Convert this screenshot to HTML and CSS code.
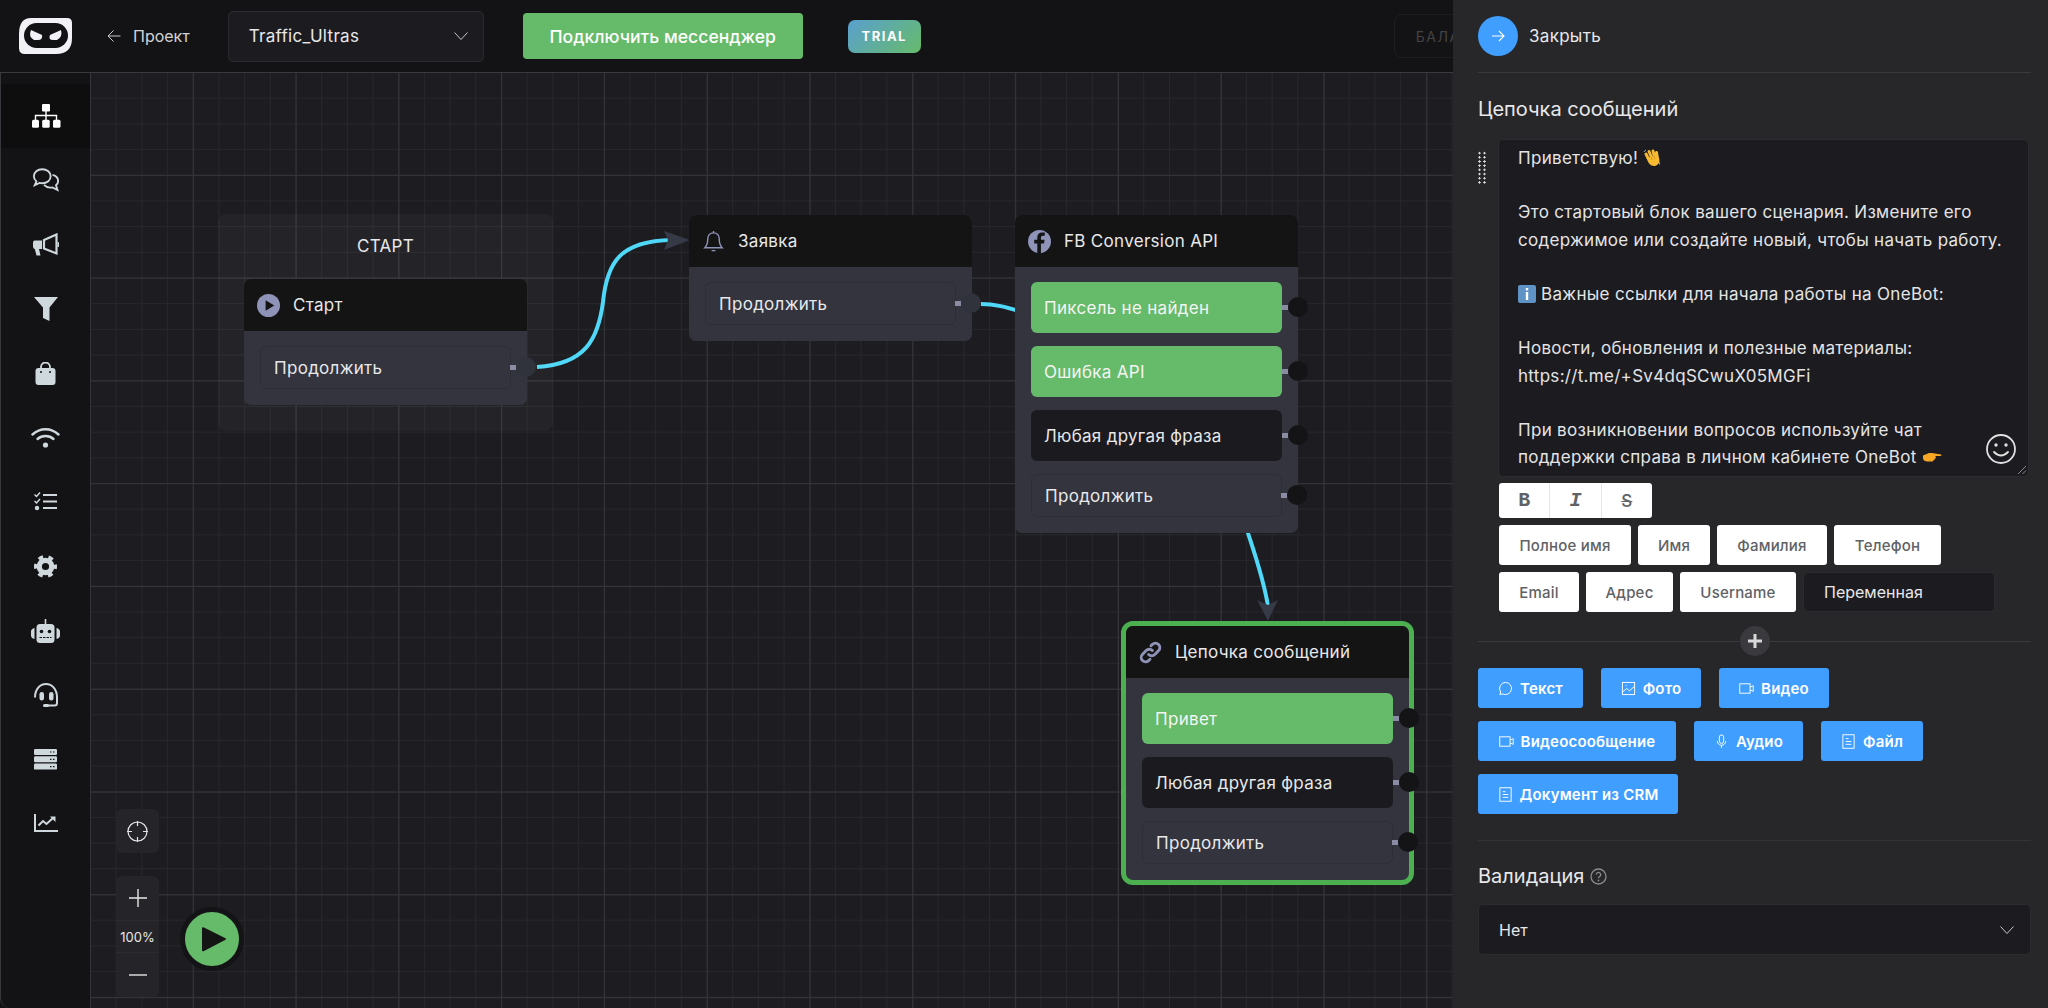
FILE: index.html
```html
<!DOCTYPE html>
<html lang="ru">
<head>
    <meta charset="UTF-8">
    <title>OneBot</title>
    <link rel="stylesheet" href="styles.css">
</head>
<body>
<div class="app">

    <header class="topbar">
        <svg class="logo" viewBox="0 0 53 36">
            <path d="M12 0H48Q53 0 53 5V20Q53 36 37 36H6Q0 36 0 30V16Q0 0 12 0Z" fill="#f1f1f6"/>
            <rect x="5" y="5" width="44" height="25" rx="12.5" fill="#121214"/>
            <path d="M12 12L23 17Q24 22 19 22H15Q9 19 12 12Z" fill="#f1f1f6"/>
            <path d="M42 12L31 17Q29 22 34 22H38Q44 19 42 12Z" fill="#f1f1f6"/>
        </svg>
        <a class="back">
            <svg class="back-arrow" viewBox="0 0 14 14"><path d="M13.5 7H1M6.5 1.5L1 7l5.5 5.5"/></svg>
            Проект
        </a>
        <div class="project-select">
            <span>Traffic_Ultras</span>
            <svg class="chevron" viewBox="0 0 14 8"><path d="M.5.5L7 7.5 13.5.5"/></svg>
        </div>
        <button class="connect-btn">Подключить мессенджер</button>
        <span class="trial">TRIAL</span>
        <div class="balance">БАЛАНС</div>
    </header>

    <nav class="sidebar">
        <a class="side-item active">
            <svg width="30" height="24" viewBox="0 0 30 24" fill="#fff">
                <rect x="11" y="0" width="8" height="7.5" rx="1"/>
                <rect x="1" y="15.7" width="7" height="8" rx="1.5"/>
                <rect x="11.2" y="15.7" width="7.5" height="8" rx="1.5"/>
                <rect x="22" y="15.7" width="7.5" height="8" rx="1.5"/>
                <path d="M15 7v9M4.5 16v-4.5h21V16" fill="none" stroke="#fff" stroke-width="1.4"/>
            </svg>
        </a>
        <a class="side-item">
            <svg width="28" height="26" viewBox="0 0 30 26" fill="none" stroke="#cfd8dc" stroke-width="2">
                <path d="M11 1.5c5.2 0 9 3.3 9 7.5s-3.8 7.5-9 7.5c-1 0-2-.1-2.9-.4L3 18.5l1.7-4C3 13 2 11.1 2 9c0-4.2 3.8-7.5 9-7.5z"/>
                <path d="M22 7.5c3.4.9 6 3.4 6 6.5 0 1.9-.9 3.5-2.3 4.7l1.6 5-5.4-2.8c-3.3.6-7-.4-9-2.6"/>
            </svg>
        </a>
        <a class="side-item">
            <svg width="26" height="23" viewBox="0 0 26 23" fill="#cfd8dc">
                <path d="M1.5 7.5H9v8.5H6l1.5 6.5H3.5L1.8 16Q0 15.5 0 13.5V9.5Q0 8 1.5 7.5z"/>
                <path d="M11 7L23.5 1.5V20.5L11 15.5z" fill="none" stroke="#cfd8dc" stroke-width="2.2"/>
                <path d="M24.5 9a2.5 2.5 0 0 1 0 5z"/>
            </svg>
        </a>
        <a class="side-item">
            <svg width="24" height="24" viewBox="0 0 24 24" fill="#cfd8dc"><path d="M0 0H24L15.5 10.5V24L9 21V10.5z"/></svg>
        </a>
        <a class="side-item">
            <svg width="21" height="23" viewBox="0 0 21 23">
                <path d="M6 8V5a4.5 4.5 0 0 1 9 0v3" fill="none" stroke="#cfd8dc" stroke-width="1.8"/>
                <rect x=".5" y="6" width="20" height="17" rx="3" fill="#cfd8dc"/>
                <circle cx="6" cy="10" r="1" fill="#121214"/><circle cx="15" cy="10" r="1" fill="#121214"/>
            </svg>
        </a>
        <a class="side-item">
            <svg width="29" height="20" viewBox="0 0 29 20" fill="none" stroke="#cfd8dc" stroke-width="2.4" stroke-linecap="round">
                <path d="M1.5 6.5C9-.5 20-.5 27.5 6.5"/>
                <path d="M6.5 11C11 7 18 7 22.5 11"/>
                <circle cx="14.5" cy="17" r="2.6" fill="#cfd8dc" stroke="none"/>
            </svg>
        </a>
        <a class="side-item">
            <svg width="23" height="19" viewBox="0 0 23 19" fill="none" stroke="#cfd8dc" stroke-width="2.2">
                <path d="M9 3H23M9 9.5H23M9 16H23"/>
                <path d="M.5 2.5L2.5 4.5 6 .5M.5 9L2.5 11 6 7" stroke-width="1.5"/>
                <circle cx="3" cy="16" r="2.2" fill="#cfd8dc" stroke="none"/>
            </svg>
        </a>
        <a class="side-item">
            <svg width="23" height="23" viewBox="0 0 24 24" fill="none" stroke="#cfd8dc">
                <circle cx="12" cy="12" r="10.2" stroke-width="3.6" stroke-dasharray="5 5.68" stroke-dashoffset="2.5"/>
                <circle cx="12" cy="12" r="6.5" stroke-width="5.5"/>
            </svg>
        </a>
        <a class="side-item">
            <svg width="29" height="24" viewBox="0 0 29 24" fill="#cfd8dc">
                <rect x="5.5" y="5" width="18" height="19" rx="3.5"/>
                <rect x="13.7" y="0" width="1.6" height="6"/>
                <path d="M3.5 9v11Q0 19 0 16.5v-4Q0 10 3.5 9zM25.5 9v11Q29 19 29 16.5v-4Q29 10 25.5 9z"/>
                <circle cx="10.5" cy="12.5" r="1.8" fill="#121214"/><circle cx="18.5" cy="12.5" r="1.8" fill="#121214"/>
                <path d="M8.5 18.5h12" stroke="#121214" stroke-width="1.2" stroke-dasharray="2.5 1"/>
            </svg>
        </a>
        <a class="side-item">
            <svg width="24" height="24" viewBox="0 0 24 24" fill="none" stroke="#cfd8dc" stroke-width="2">
                <path d="M1 14.5C1 6 6 1 12 1s11 5 11 13.5V20q0 2.5-2.5 2.5H13"/>
                <rect x="5.5" y="9" width="4.5" height="8.5" rx="2.2" fill="#cfd8dc" stroke="none"/>
                <rect x="15" y="9" width="4.5" height="8.5" rx="2.2" fill="#cfd8dc" stroke="none"/>
                <rect x="9" y="21" width="6" height="3" rx="1.5" fill="#cfd8dc" stroke="none"/>
            </svg>
        </a>
        <a class="side-item">
            <svg width="23" height="21" viewBox="0 0 23 21" fill="#cfd8dc">
                <rect y="0" width="23" height="6" rx="1.2"/><rect y="7.3" width="23" height="6" rx="1.2"/><rect y="14.6" width="23" height="6" rx="1.2"/>
                <path d="M16 3h1.5M19 3h1.5M16 10.3h1.5M19 10.3h1.5M16 17.6h1.5M19 17.6h1.5" stroke="#121214" stroke-width="1.2"/>
            </svg>
        </a>
        <a class="side-item">
            <svg width="24" height="18" viewBox="0 0 24 18" fill="none" stroke="#cfd8dc" stroke-width="2">
                <path d="M1 0V17H24"/>
                <path d="M4.5 11.5L9 7l3.5 3L19 4"/>
                <path d="M16 2.5H21.5V8z" fill="#cfd8dc" stroke="none"/>
            </svg>
        </a>
    </nav>

    <main class="canvas">
        <svg class="edges" width="1958" height="936" viewBox="90 72 1958 936">
            <g fill="none" stroke="#4fd8f7" stroke-width="4">
                <path d="M537 367C585 364 598 340 603 302C607 262 620 241 672 240"/>
                <path d="M981 304C995 304 1006 307 1022 312"/>
                <path d="M1246 527C1254 552 1263 576 1268 606"/>
            </g>
            <g fill="#363a47">
                <path d="M664 231L690 240 664 250 668 240z"/>
                <path d="M1257 600L1268 621 1278 600 1268 605z"/>
            </g>
        </svg>

        <div class="group">СТАРТ</div>

        <div class="node node-start">
            <div class="node-head">
                <svg class="node-icon" viewBox="0 0 24 24"><circle cx="12" cy="12" r="12" fill="#8f93b8"/><path d="M9 6.5v11L18 12z" fill="#141414"/></svg>
                Старт
            </div>
            <div class="node-body">
                <div class="item item-plain">Продолжить<i class="port port-linked"></i></div>
            </div>
        </div>

        <div class="node node-lead">
            <div class="node-head">
                <svg class="node-icon" viewBox="0 0 24 24" fill="none" stroke="#8f93b8" stroke-width="1.5"><path d="M12 3c-4 0-6 3-6 6.5 0 5-1.5 7.5-3 9h18c-1.5-1.5-3-4-3-9C18 6 16 3 12 3zM12 3V1M10 21.5h4"/></svg>
                Заявка
            </div>
            <div class="node-body">
                <div class="item item-plain">Продолжить<i class="port port-linked"></i></div>
            </div>
        </div>

        <div class="node node-fb">
            <div class="node-head">
                <svg class="node-icon" viewBox="0 0 24 24"><circle cx="12" cy="12" r="12" fill="#8f93b8"/><path d="M13.5 24V14h3.2l.6-3.8h-3.8V8c0-1.2.5-2 2-2h2V2.700c-.8-.1-1.800-.2-2.800-.2-3 0-5 1.800-5 5v2.700H6.500V14h3.200v10z" fill="#141414"/></svg>
                FB Conversion API
            </div>
            <div class="node-body">
                <div class="item item-green">Пиксель не найден<i class="port"></i></div>
                <div class="item item-green">Ошибка API<i class="port"></i></div>
                <div class="item item-dark">Любая другая фраза<i class="port"></i></div>
                <div class="item item-plain">Продолжить<i class="port"></i></div>
            </div>
        </div>

        <div class="node node-chain">
            <div class="node-head">
                <svg class="node-icon" viewBox="0 0 24 24" fill="none" stroke="#8f93b8" stroke-width="3" stroke-linecap="round"><path d="M10 14a4.5 4.5 0 0 0 6.5 0l4-4a4.600 4.600 0 0 0-6.500-6.500l-1.500 1.500"/><path d="M14 10a4.5 4.5 0 0 0-6.500 0l-4 4a4.600 4.600 0 0 0 6.500 6.500l1.500-1.500"/></svg>
                Цепочка сообщений
            </div>
            <div class="node-body">
                <div class="item item-green">Привет<i class="port"></i></div>
                <div class="item item-dark">Любая другая фраза<i class="port"></i></div>
                <div class="item item-plain">Продолжить<i class="port"></i></div>
            </div>
        </div>

        <div class="controls">
            <button class="ctrl-target">
                <svg width="21" height="21" viewBox="0 0 21 21" fill="none" stroke="#e6e6e6" stroke-width="1.2"><circle cx="10.5" cy="10.5" r="9.5"/><path d="M10.5 0v5M10.5 16v5M0 10.5h5M16 10.5h5"/></svg>
            </button>
            <div class="ctrl-zoom">
                <button class="ctrl-step"><svg width="20" height="20" viewBox="0 0 20 20" stroke="#e6e6e6" stroke-width="1.4"><path d="M10 1v18M1 10h18"/></svg></button>
                <span class="ctrl-value">100%</span>
                <button class="ctrl-step"><svg width="20" height="20" viewBox="0 0 20 20" stroke="#e6e6e6" stroke-width="1.4"><path d="M1 10h18"/></svg></button>
            </div>
        </div>

        <button class="play">
            <svg width="26" height="30" viewBox="0 0 26 30"><path d="M2 3.5L23 14q2 1 0 2L2 27q-2 1-2-1V4.5q0-2 2-1z" fill="#141414"/></svg>
        </button>
    </main>

    <!-- drawer lies over the canvas -->
    <aside class="panel">
        <div class="panel-head">
            <button class="close-btn"><svg width="14" height="14" viewBox="0 0 14 14" fill="none" stroke="#fff" stroke-width="1.1"><path d="M1 7H13M8 2l5 5-5 5"/></svg></button>
            Закрыть
        </div>
        <h2 class="panel-title">Цепочка сообщений</h2>

        <div class="message-row">
            <div class="handle"></div>
            <div class="message">
                Приветствую!
                <svg class="emoji" viewBox="0 0 18 18">
                    <g stroke="#f6b92f" stroke-width="3" stroke-linecap="round"><path d="M5 9L3 5M8 7L6 2.5M11 6L10 2M14 7L13.5 3.5"/></g>
                    <path d="M3.5 9L13 6l2.5 1 1 4c0 3.5-2.5 6-5.5 6-3.5 0-6-3-7.5-8z" fill="#f6b92f"/>
                    <path d="M8 8l1 3M11 7l.8 3" stroke="#c98a17" stroke-width=".7"/>
                    <path d="M1 3Q1.5 1.5 3 1M16 13q1 1 .5 2.5" stroke="#8fa8c4" fill="none"/>
                </svg>
                <br><br>
                Это стартовый блок вашего сценария. Измените его<br>
                содержимое или создайте новый, чтобы начать работу.<br><br>
                <svg class="emoji" viewBox="0 0 18 18"><rect width="18" height="18" rx="2" fill="#5f93c5"/><rect x="7.8" y="7" width="2.4" height="8" fill="#fff"/><rect x="7.8" y="3" width="2.4" height="2.4" fill="#fff"/></svg>
                Важные ссылки для начала работы на OneBot:<br><br>
                Новости, обновления и полезные материалы:<br>
                https://t.me/+Sv4dqSCwuX05MGFi<br><br>
                При возникновении вопросов используйте чат<br>
                поддержки справа в личном кабинете OneBot
                <svg class="emoji emoji-wide" viewBox="0 0 20 14"><path d="M1 5.5L7 3l3 0L19 4.5q1 1.5-1 1.5h-5l1 1q0 1-1 1.5 0 1.5-1.5 1.5 0 1.5-1.5 1.5H5Q1 11 1 8z" fill="#f5a623"/></svg>
                <svg class="smile" viewBox="0 0 30 30" fill="none" stroke="#e0e0e0" stroke-width="1.8"><circle cx="15" cy="15" r="14"/><path d="M8 18q7 7 14 0" stroke-linecap="round"/><circle cx="10" cy="11" r="1.7" fill="#e0e0e0" stroke="none"/><circle cx="20" cy="11" r="1.7" fill="#e0e0e0" stroke="none"/></svg>
                <svg class="grip" viewBox="0 0 10 10" stroke="#888" stroke-width="1"><path d="M1 9L9 1M5.5 9L9 5.5"/></svg>
            </div>
        </div>

        <div class="tools">
            <div class="format">
                <button class="fmt fmt-b">B</button>
                <button class="fmt fmt-i">I</button>
                <button class="fmt fmt-s">S</button>
            </div>
            <div class="chips">
                <button class="chip chip-fullname">Полное имя</button>
                <button class="chip chip-name">Имя</button>
                <button class="chip chip-surname">Фамилия</button>
                <button class="chip chip-phone">Телефон</button>
            </div>
            <div class="chips">
                <button class="chip chip-email">Email</button>
                <button class="chip chip-address">Адрес</button>
                <button class="chip chip-username">Username</button>
                <div class="variable">Переменная</div>
            </div>
        </div>

        <div class="add-row">
            <span class="add-line"></span>
            <button class="add-btn"><svg width="16" height="16" viewBox="0 0 16 16" stroke="#d8d8d8" stroke-width="3"><path d="M8 1v14M1 8h14"/></svg></button>
            <span class="add-line"></span>
        </div>

        <div class="blocks">
            <button class="block block-text">
                <svg viewBox="0 0 16 16"><path d="M8 1.5a6.5 6.5 0 1 1-3 12.3L2 14.5l.8-2.8A6.5 6.5 0 0 1 8 1.5z"/></svg>Текст
            </button>
            <button class="block block-photo">
                <svg viewBox="0 0 16 16"><rect x="1.5" y="1.5" width="13" height="13"/><path d="M1.5 12L6 8l3 2.5 5.5-5M5 5h1"/></svg>Фото
            </button>
            <button class="block block-video">
                <svg viewBox="0 0 16 16"><rect x=".8" y="3" width="11" height="10"/><path d="M11.8 6.5l3.4-1.5v6l-3.4-1.5"/></svg>Видео
            </button>
            <button class="block block-note">
                <svg viewBox="0 0 16 16"><rect x=".8" y="3" width="11" height="10"/><path d="M11.8 6.5l3.4-1.5v6l-3.4-1.5"/></svg>Видеосообщение
            </button>
            <button class="block block-audio">
                <svg viewBox="0 0 16 16"><rect x="5.7" y="1" width="4.6" height="9" rx="2.3"/><path d="M3.5 7.5a4.5 4.5 0 0 0 9 0M8 12v3"/></svg>Аудио
            </button>
            <button class="block block-file">
                <svg viewBox="0 0 16 16"><rect x="2" y=".8" width="12" height="14.4"/><path d="M5 5h3M5 8h6M5 11h6"/></svg>Файл
            </button>
            <button class="block block-crm">
                <svg viewBox="0 0 16 16"><rect x="2" y=".8" width="12" height="14.4"/><path d="M5 5h3M5 8h6M5 11h6"/></svg>Документ из CRM
            </button>
        </div>

        <div class="panel-sep"></div>

        <div class="validation">
            Валидация
            <svg width="17" height="17" viewBox="0 0 17 17" fill="none" stroke="#8a8a8a" stroke-width="1.3"><circle cx="8.5" cy="8.5" r="7.5"/><path d="M6.3 6.6a2.2 2.2 0 1 1 3.4 1.9c-.8.5-1.2.9-1.2 1.8"/><circle cx="8.5" cy="12.5" r=".9" fill="#8a8a8a" stroke="none"/></svg>
        </div>
        <div class="valid-select">
            Нет
            <svg class="chevron" viewBox="0 0 14 8"><path d="M.5.5L7 7.5 13.5.5"/></svg>
        </div>
    </aside>
</div>
</body>
</html>
```

FILE: styles.css
```css
:root{
    --fundo: #1c1c21;
    --barra: #131315;
    --painel: #27272a;
    --no-corpo: #33343e;
    --no-topo: #141414;
    --verde: #66bb6a;
    --azul: #409eff;
    --texto: #e8e8ea;
}

*{
    box-sizing: border-box;
}

body{
    margin: 0;
    background-color: var(--barra);
    font-family: Inter, "Liberation Sans", sans-serif;
    color: var(--texto);
}

button{
    font-family: inherit;
    border: none;
    padding: 0;
    cursor: pointer;
}

.app{
    position: relative;
    width: 2048px;
    height: 1008px;
    overflow: hidden;
    display: grid;
    grid-template-columns: 90px 1fr;
    grid-template-rows: 72px 1fr;
}

/* barra superior */
.topbar{
    position: relative;
    z-index: 1;
    grid-column: 1 / 3;
    display: flex;
    align-items: center;
    box-shadow: 0 1px 0 #3a3a3e;
    background-color: var(--barra);
    padding-left: 19px;
}

.logo{
    width: 53px;
    height: 36px;
    flex: none;
}

.back{
    display: flex;
    align-items: center;
    gap: 12px;
    margin-left: 35px;
    font-size: 16px;
    color: #d4d4d6;
}

.back-arrow{
    width: 14px;
    height: 14px;
    fill: none;
    stroke: #c8c8ca;
    stroke-width: 1;
}

.project-select{
    display: flex;
    align-items: center;
    justify-content: space-between;
    width: 256px;
    height: 51px;
    margin-left: 38px;
    padding: 0 15px 0 20px;
    background-color: #1c1c20;
    border: 1px solid #2c2c30;
    border-radius: 5px;
    font-size: 17px;
    letter-spacing: 0.3px;
}

.chevron{
    width: 14px;
    height: 8px;
    fill: none;
    stroke: #c8c8ca;
    stroke-width: 1;
}

.connect-btn{
    width: 280px;
    height: 46px;
    margin-left: 39px;
    background-color: var(--verde);
    border-radius: 4px;
    color: #fff;
    font-size: 17.6px;
    font-weight: 500;
}

.trial{
    display: flex;
    align-items: center;
    justify-content: center;
    width: 73px;
    height: 33px;
    margin-left: 45px;
    border-radius: 7px;
    background: linear-gradient(135deg, #5aa0cf, #66bb6a);
    color: #fff;
    font-size: 13px;
    font-weight: 700;
    letter-spacing: 1.5px;
}

.balance{
    display: flex;
    align-items: center;
    width: 150px;
    height: 44px;
    margin-left: 473px;
    padding-left: 21px;
    border: 1px solid #1e1e21;
    border-radius: 8px;
    color: #434345;
    font-size: 14px;
    letter-spacing: 1.5px;
}

/* menu lateral */
.sidebar{
    display: flex;
    flex-direction: column;
    padding-top: 12px;
    background-color: var(--barra);
    border-left: 1px solid #38383c;
    border-bottom-left-radius: 10px;
}

.side-item{
    display: flex;
    align-items: center;
    justify-content: center;
    height: 64.3px;
    flex: none;
}

.side-item.active{
    background-color: #0e0e0f;
}

/* canvas */
.canvas{
    position: relative;
    background-color: var(--fundo);
    background-image:
        linear-gradient(#35353a 1px, transparent 1px),
        linear-gradient(90deg, #35353a 1px, transparent 1px),
        linear-gradient(#27272c 1px, transparent 1px),
        linear-gradient(90deg, #27272c 1px, transparent 1px);
    background-size: 102.8px 102.8px, 102.8px 102.8px, 25.7px 25.7px, 25.7px 25.7px;
    background-position: 0 0;
}

.edges{
    position: absolute;
    left: 0;
    top: 0;
}

.group{
    position: absolute;
    left: 128px;
    top: 142px;
    width: 335px;
    height: 217px;
    padding-top: 22px;
    text-align: center;
    background-color: rgba(255, 255, 255, 0.035);
    border-radius: 8px;
    font-size: 17px;
    letter-spacing: 0.3px;
    line-height: 20px;
}

.node{
    position: absolute;
    width: 283px;
    background-color: var(--no-corpo);
    border-radius: 7px;
}

.node-start{
    left: 154px;
    top: 207px;
}

.node-lead{
    left: 599px;
    top: 143px;
}

.node-fb{
    left: 925px;
    top: 143px;
}

.node-chain{
    left: 1031px;
    top: 549px;
    width: 293px;
    border: 5px solid #4caf50;
    border-radius: 12px;
}

.node-head{
    display: flex;
    align-items: center;
    gap: 13px;
    height: 52px;
    padding-left: 13px;
    background-color: var(--no-topo);
    border-radius: 7px 7px 0 0;
    font-size: 17px;
    letter-spacing: 0.3px;
}

.node-icon{
    width: 23px;
    height: 23px;
    flex: none;
}

.node-body{
    display: flex;
    flex-direction: column;
    gap: 13px;
    padding: 15px 16px 16px;
}

.item{
    position: relative;
    display: flex;
    align-items: center;
    height: 51px;
    padding-left: 13px;
    border-radius: 6px;
    font-size: 17px;
    letter-spacing: 0.3px;
}

.item-green{
    background-color: var(--verde);
    color: #f4f4f4;
}

.item-dark{
    background-color: #1b1b1f;
}

.item-plain{
    height: 43px;
    border: 1px solid #2d2e37;
}

.port{
    position: absolute;
    left: 100%;
    top: 50%;
    width: 6px;
    height: 5px;
    margin-top: -3px;
    background-color: #8a8ca3;
}

.port::after{
    content: "";
    position: absolute;
    left: 6px;
    top: -7.5px;
    width: 20px;
    height: 20px;
    border-radius: 50%;
    background-color: #141416;
}

.port-linked::after{
    background-color: #31333c;
}

.controls{
    position: absolute;
    left: 26px;
    top: 737px;
    display: flex;
    flex-direction: column;
    gap: 23px;
    width: 43px;
}

.ctrl-target{
    display: flex;
    align-items: center;
    justify-content: center;
    height: 44px;
    background-color: #252529;
    border-radius: 6px;
}

.ctrl-zoom{
    display: flex;
    flex-direction: column;
    background-color: #252529;
    border-radius: 6px;
}

.ctrl-step{
    display: flex;
    align-items: center;
    justify-content: center;
    height: 44px;
    background: none;
}

.ctrl-value{
    height: 33px;
    line-height: 33px;
    text-align: center;
    font-size: 13px;
    border-top: 1px solid #2c2c30;
    border-bottom: 1px solid #2c2c30;
}

.play{
    position: absolute;
    left: 90px;
    top: 835px;
    display: flex;
    align-items: center;
    justify-content: center;
    width: 64px;
    height: 64px;
    padding-left: 5px;
    background-color: var(--verde);
    border: 5px solid #141416;
    border-radius: 50%;
}

/* painel lateral */
.panel{
    position: absolute;
    z-index: 2;
    right: 0;
    top: 0;
    bottom: 0;
    width: 595px;
    padding: 0 17px 0 25px;
    background-color: var(--painel);
}

.panel-head{
    display: flex;
    align-items: center;
    gap: 11px;
    height: 73px;
    border-bottom: 1px solid #3a3a3d;
    font-size: 17px;
    letter-spacing: 0.3px;
}

.close-btn{
    display: flex;
    align-items: center;
    justify-content: center;
    width: 40px;
    height: 40px;
    border-radius: 50%;
    background-color: var(--azul);
}

.panel-title{
    margin: 24px 0 0;
    font-size: 20px;
    line-height: 24px;
    font-weight: 400;
}

.message-row{
    display: flex;
    gap: 12px;
    margin-top: 18px;
}

.handle{
    width: 9px;
    height: 34px;
    margin-top: 12px;
    margin-left: -1px;
    flex: none;
    background-image: radial-gradient(circle, #d8d8d8 1px, transparent 1.2px);
    background-size: 5px 4.2px;
}

.message{
    position: relative;
    width: 531px;
    height: 338px;
    padding: 5px 0 0 19px;
    overflow: hidden;
    background-color: #1c1c20;
    border: 1px solid #2c2c30;
    border-radius: 5px;
    font-size: 17px;
    letter-spacing: 0.3px;
    line-height: 27.2px;
    color: #e4e4e6;
    white-space: nowrap;
}

.emoji{
    width: 18px;
    height: 18px;
    vertical-align: -3px;
}

.emoji-wide{
    width: 20px;
    height: 14px;
    vertical-align: -1px;
}

.smile{
    position: absolute;
    right: 12px;
    bottom: 12px;
    width: 30px;
    height: 30px;
}

.grip{
    position: absolute;
    right: 1px;
    bottom: 1px;
    width: 10px;
    height: 10px;
}

.tools{
    display: flex;
    flex-direction: column;
    gap: 7px;
    margin: 6px 0 0 21px;
}

.format{
    display: flex;
    width: 153px;
    height: 35px;
    background-color: #fff;
    border-radius: 3px;
    overflow: hidden;
}

.fmt{
    flex: 1;
    background: none;
    color: #606266;
    font-family: "Liberation Mono", monospace;
    font-size: 20px;
    font-weight: 700;
    border-right: 1px solid #e4e4e6;
}

.fmt:last-child{
    border-right: none;
}

.fmt-i{
    font-style: italic;
}

.fmt-s{
    font-family: Inter, sans-serif;
    font-size: 17px;
    font-weight: 500;
    text-decoration: line-through;
}

.chips{
    display: flex;
    gap: 7px;
    height: 40px;
}

.chip{
    background-color: #fff;
    border-radius: 3px;
    color: #606266;
    font-size: 15px;
    letter-spacing: 0.2px;
    font-weight: 500;
}

.chip-fullname{ width: 132px; }
.chip-name{ width: 72px; }
.chip-surname{ width: 110px; }
.chip-phone{ width: 107px; }
.chip-email{ width: 80px; }
.chip-address{ width: 87px; }
.chip-username{ width: 116px; }

.variable{
    display: flex;
    align-items: center;
    width: 192px;
    padding-left: 20px;
    background-color: #1c1c20;
    border: 1px solid #2c2c30;
    border-radius: 5px;
    font-size: 16px;
}

.add-row{
    display: flex;
    align-items: center;
    height: 30px;
    margin-top: 14px;
}

.add-line{
    flex: 1;
    height: 1px;
    background-color: #3a3a3d;
}

.add-btn{
    display: flex;
    align-items: center;
    justify-content: center;
    width: 30px;
    height: 30px;
    border-radius: 50%;
    background-color: #3a3a3e;
}

.blocks{
    display: flex;
    flex-wrap: wrap;
    gap: 13px 18px;
    margin-top: 12px;
}

.block{
    display: flex;
    align-items: center;
    justify-content: center;
    gap: 7px;
    height: 40px;
    background-color: var(--azul);
    border-radius: 3px;
    color: #fff;
    font-size: 15px;
    letter-spacing: 0.2px;
    font-weight: 600;
}

.block svg{
    width: 15px;
    height: 15px;
    fill: none;
    stroke: #fff;
    stroke-width: 1;
}

.block-text{ width: 105px; }
.block-photo{ width: 100px; }
.block-video{ width: 110px; }
.block-note{ width: 198px; }
.block-audio{ width: 109px; }
.block-file{ width: 102px; }
.block-crm{ width: 200px; }

.panel-sep{
    height: 1px;
    margin-top: 26px;
    background-color: #333336;
}

.validation{
    display: flex;
    align-items: center;
    gap: 6px;
    height: 24px;
    margin-top: 23px;
    font-size: 20px;
}

.valid-select{
    display: flex;
    align-items: center;
    justify-content: space-between;
    height: 51px;
    margin-top: 16px;
    padding: 0 16px 0 20px;
    background-color: #1c1c20;
    border: 1px solid #2c2c30;
    border-radius: 5px;
    font-size: 16px;
}
```
